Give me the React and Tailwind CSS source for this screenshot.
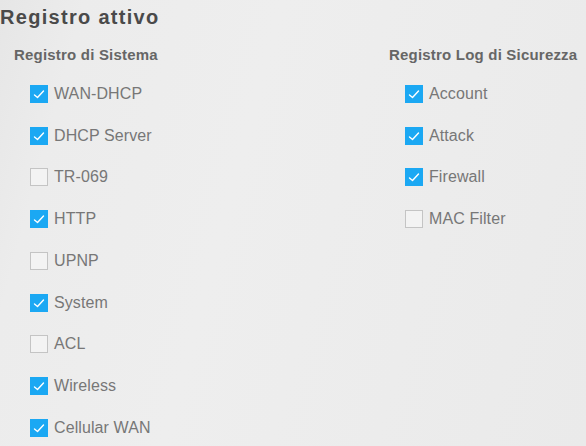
import React from "react";

const systemLogs = [
  { label: "WAN-DHCP", checked: true },
  { label: "DHCP Server", checked: true },
  { label: "TR-069", checked: false },
  { label: "HTTP", checked: true },
  { label: "UPNP", checked: false },
  { label: "System", checked: true },
  { label: "ACL", checked: false },
  { label: "Wireless", checked: true },
  { label: "Cellular WAN", checked: true },
];

const securityLogs = [
  { label: "Account", checked: true },
  { label: "Attack", checked: true },
  { label: "Firewall", checked: true },
  { label: "MAC Filter", checked: false },
];

function CheckRow({ label, checked }) {
  return (
    <label className="flex h-[41.75px] items-center gap-[6px] pl-4">
      {checked ? (
        <span className="flex h-[18px] w-[18px] items-center justify-center bg-[#1ba8f3]">
          <svg width="12" height="10" viewBox="0 0 12 10" fill="none">
            <path d="M1.5 6 L4.5 8.5 L10.5 2" stroke="white" strokeWidth="1.4" strokeLinecap="round" strokeLinejoin="round" />
          </svg>
        </span>
      ) : (
        <span className="h-[18px] w-[18px] border border-[#c4c4c4] bg-[#f3f3f3]" />
      )}
      <span className="text-[16px] leading-5 tracking-[0.1px] text-[#777777]">{label}</span>
    </label>
  );
}

function LogColumn({ title, items }) {
  return (
    <div>
      <h3 className="text-[15px] font-bold leading-5 tracking-[0.2px] text-[#666666]">{title}</h3>
      <div className="mt-[8px] flex flex-col">
        {items.map((item) => (
          <CheckRow key={item.label} {...item} />
        ))}
      </div>
    </div>
  );
}

export default function App() {
  return (
    <div
      className="h-[446px] w-[586px] overflow-hidden bg-[linear-gradient(105deg,#e6e6e6_0%,#ececec_12%,#eeeeee_40%,#eaeaea_100%)]"
      style={{ fontFamily: '"Liberation Sans", Arial, sans-serif' }}
    >
      <h2 className="pt-[3px] text-[20px] font-bold leading-7 tracking-[1.3px] text-[#4a4a4a]">Registro attivo</h2>
      <div className="mt-[14px] grid grid-cols-[375px_1fr] pl-[14px]">
        <LogColumn title="Registro di Sistema" items={systemLogs} />
        <LogColumn title="Registro Log di Sicurezza" items={securityLogs} />
      </div>
    </div>
  );
}
